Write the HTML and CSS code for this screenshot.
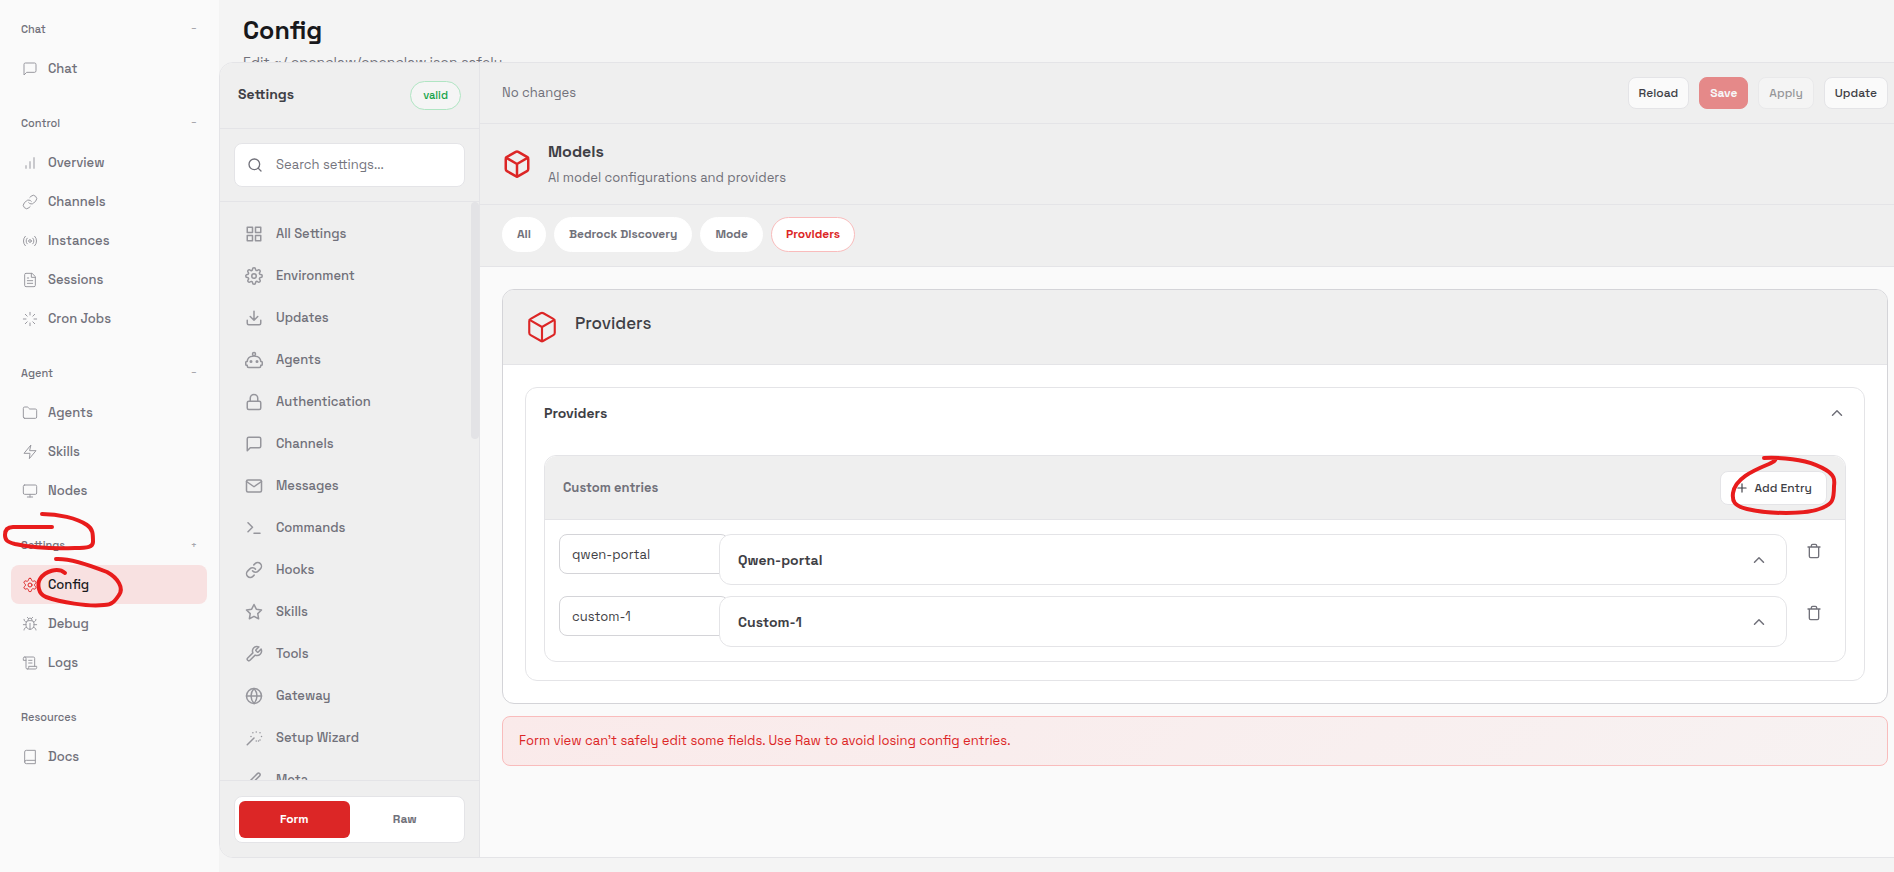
FILE: index.html
```html
<!DOCTYPE html>
<html lang="en">
<head>
    <meta charset="UTF-8">
    <meta name="viewport" content="width=device-width, initial-scale=1.0">
    <title>Config</title>
    <link rel="stylesheet" href="styles.css">
</head>
<body>
    <!-- Icon sprite -->
    <svg class="sprite" aria-hidden="true">
        <symbol id="i-chat" viewBox="0 0 24 24"><path d="M21 15a2 2 0 0 1-2 2H7l-4 4V5a2 2 0 0 1 2-2h14a2 2 0 0 1 2 2z"/></symbol>
        <symbol id="i-bars" viewBox="0 0 24 24"><path d="M12 20V10M18 20V4M6 20v-4"/></symbol>
        <symbol id="i-link" viewBox="0 0 24 24"><path d="M10 13a5 5 0 0 0 7.54.54l3-3a5 5 0 0 0-7.07-7.07l-1.72 1.71"/><path d="M14 11a5 5 0 0 0-7.54-.54l-3 3a5 5 0 0 0 7.07 7.07l1.71-1.71"/></symbol>
        <symbol id="i-radio" viewBox="0 0 24 24"><circle cx="12" cy="12" r="2"/><path d="M16.24 7.76a6 6 0 0 1 0 8.49m-8.48-.01a6 6 0 0 1 0-8.49m11.31-2.82a10 10 0 0 1 0 14.14m-14.14 0a10 10 0 0 1 0-14.14"/></symbol>
        <symbol id="i-file" viewBox="0 0 24 24"><path d="M14.5 2H6a2 2 0 0 0-2 2v16a2 2 0 0 0 2 2h12a2 2 0 0 0 2-2V7.5z"/><path d="M14 2v6h6M16 13H8M16 17H8M10 9H8"/></symbol>
        <symbol id="i-loader" viewBox="0 0 24 24"><path d="M12 2v4M12 18v4M4.93 4.93l2.83 2.83M16.24 16.24l2.83 2.83M2 12h4M18 12h4M4.93 19.07l2.83-2.83M16.24 7.76l2.83-2.83"/></symbol>
        <symbol id="i-folder" viewBox="0 0 24 24"><path d="M4 20h16a2 2 0 0 0 2-2V8a2 2 0 0 0-2-2h-7.93a2 2 0 0 1-1.66-.9l-.82-1.2A2 2 0 0 0 7.93 3H4a2 2 0 0 0-2 2v13a2 2 0 0 0 2 2z"/></symbol>
        <symbol id="i-zap" viewBox="0 0 24 24"><path d="M13 2L3 14h9l-1 8 10-12h-9z"/></symbol>
        <symbol id="i-monitor" viewBox="0 0 24 24"><rect x="2" y="3" width="20" height="14" rx="2"/><path d="M8 21h8M12 17v4"/></symbol>
        <symbol id="i-settings" viewBox="0 0 24 24"><path d="M12.22 2h-.44a2 2 0 0 0-2 2v.18a2 2 0 0 1-1 1.73l-.43.25a2 2 0 0 1-2 0l-.15-.08a2 2 0 0 0-2.73.73l-.22.38a2 2 0 0 0 .73 2.73l.15.1a2 2 0 0 1 1 1.72v.51a2 2 0 0 1-1 1.74l-.15.09a2 2 0 0 0-.73 2.73l.22.38a2 2 0 0 0 2.73.73l.15-.08a2 2 0 0 1 2 0l.43.25a2 2 0 0 1 1 1.73V20a2 2 0 0 0 2 2h.44a2 2 0 0 0 2-2v-.18a2 2 0 0 1 1-1.73l.43-.25a2 2 0 0 1 2 0l.15.08a2 2 0 0 0 2.73-.73l.22-.39a2 2 0 0 0-.73-2.73l-.15-.08a2 2 0 0 1-1-1.74v-.5a2 2 0 0 1 1-1.74l.15-.09a2 2 0 0 0 .73-2.73l-.22-.38a2 2 0 0 0-2.73-.73l-.15.08a2 2 0 0 1-2 0l-.43-.25a2 2 0 0 1-1-1.73V4a2 2 0 0 0-2-2z"/><circle cx="12" cy="12" r="3"/></symbol>
        <symbol id="i-bug" viewBox="0 0 24 24"><path d="M8 2l1.88 1.88M14.12 3.88L16 2M9 7.13v-1a3 3 0 1 1 6 0v1"/><path d="M12 20c-3.3 0-6-2.7-6-6v-3a4 4 0 0 1 4-4h4a4 4 0 0 1 4 4v3c0 3.3-2.7 6-6 6M12 20v-9M6.53 9C4.6 8.8 3 7.1 3 5M6 13H2M3 21c0-2.1 1.7-3.9 3.8-4M20.97 5c0 2.1-1.6 3.8-3.5 4M22 13h-4M17.2 17c2.1.1 3.8 1.9 3.8 4"/></symbol>
        <symbol id="i-scroll" viewBox="0 0 24 24"><path d="M8 21h12a2 2 0 0 0 2-2v-2H10v2a2 2 0 1 1-4 0V5a2 2 0 1 0-4 0v3h4"/><path d="M19 17V5a2 2 0 0 0-2-2H4M15 8h-5M15 12h-5"/></symbol>
        <symbol id="i-book" viewBox="0 0 24 24"><path d="M4 19.5v-15A2.5 2.5 0 0 1 6.5 2H20v20H6.5a2.5 2.5 0 0 1 0-5H20"/></symbol>
        <symbol id="i-search" viewBox="0 0 24 24"><circle cx="11" cy="11" r="8"/><path d="M21 21l-4.35-4.35"/></symbol>
        <symbol id="i-grid" viewBox="0 0 24 24"><path d="M3 3h7v7H3zM14 3h7v7h-7zM14 14h7v7h-7zM3 14h7v7H3z"/></symbol>
        <symbol id="i-gear" viewBox="0 0 24 24"><circle cx="12" cy="12" r="3"/><path d="M19.4 15a1.65 1.65 0 0 0 .33 1.82l.06.06a2 2 0 0 1 0 2.83 2 2 0 0 1-2.83 0l-.06-.06a1.65 1.65 0 0 0-1.82-.33 1.65 1.65 0 0 0-1 1.51V21a2 2 0 0 1-2 2 2 2 0 0 1-2-2v-.09A1.65 1.65 0 0 0 9 19.4a1.65 1.65 0 0 0-1.82.33l-.06.06a2 2 0 0 1-2.83 0 2 2 0 0 1 0-2.83l.06-.06a1.65 1.65 0 0 0 .33-1.82 1.65 1.65 0 0 0-1.51-1H3a2 2 0 0 1-2-2 2 2 0 0 1 2-2h.09A1.65 1.65 0 0 0 4.6 9a1.65 1.65 0 0 0-.33-1.82l-.06-.06a2 2 0 0 1 0-2.83 2 2 0 0 1 2.83 0l.06.06a1.65 1.65 0 0 0 1.82.33H9a1.65 1.65 0 0 0 1-1.51V3a2 2 0 0 1 2-2 2 2 0 0 1 2 2v.09a1.65 1.65 0 0 0 1 1.51 1.65 1.65 0 0 0 1.82-.33l.06-.06a2 2 0 0 1 2.83 0 2 2 0 0 1 0 2.83l-.06.06a1.65 1.65 0 0 0-.33 1.82V9a1.65 1.65 0 0 0 1.51 1H21a2 2 0 0 1 2 2 2 2 0 0 1-2 2h-.09a1.65 1.65 0 0 0-1.51 1z"/></symbol>
        <symbol id="i-download" viewBox="0 0 24 24"><path d="M21 15v4a2 2 0 0 1-2 2H5a2 2 0 0 1-2-2v-4M7 10l5 5 5-5M12 15V3"/></symbol>
        <symbol id="i-robot" viewBox="0 0 24 24"><path d="M12 2a2 2 0 0 1 2 2c0 .74-.4 1.39-1 1.73V7h1a7 7 0 0 1 7 7h1a1 1 0 0 1 1 1v3a1 1 0 0 1-1 1h-1v1a2 2 0 0 1-2 2H5a2 2 0 0 1-2-2v-1H2a1 1 0 0 1-1-1v-3a1 1 0 0 1 1-1h1a7 7 0 0 1 7-7h1V5.73c-.6-.34-1-.99-1-1.73a2 2 0 0 1 2-2z"/><circle cx="8" cy="14" r="1"/><circle cx="16" cy="14" r="1"/></symbol>
        <symbol id="i-lock" viewBox="0 0 24 24"><rect x="3" y="11" width="18" height="11" rx="2"/><path d="M7 11V7a5 5 0 0 1 10 0v4"/></symbol>
        <symbol id="i-mail" viewBox="0 0 24 24"><rect x="2" y="4" width="20" height="16" rx="2"/><path d="M22 6l-10 7L2 6"/></symbol>
        <symbol id="i-terminal" viewBox="0 0 24 24"><path d="M4 17l6-6-6-6M12 19h8"/></symbol>
        <symbol id="i-star" viewBox="0 0 24 24"><path d="M12 2l3.09 6.26L22 9.27l-5 4.87 1.18 6.88L12 17.77l-6.18 3.25L7 14.14 2 9.27l6.91-1.01z"/></symbol>
        <symbol id="i-wrench" viewBox="0 0 24 24"><path d="M14.7 6.3a1 1 0 0 0 0 1.4l1.6 1.6a1 1 0 0 0 1.4 0l3.77-3.77a6 6 0 0 1-7.94 7.94l-6.91 6.91a2.12 2.12 0 0 1-3-3l6.91-6.91a6 6 0 0 1 7.94-7.94z"/></symbol>
        <symbol id="i-globe" viewBox="0 0 24 24"><circle cx="12" cy="12" r="10"/><path d="M2 12h20M12 2a15.3 15.3 0 0 1 4 10 15.3 15.3 0 0 1-4 10 15.3 15.3 0 0 1-4-10 15.3 15.3 0 0 1 4-10z"/></symbol>
        <symbol id="i-wand" viewBox="0 0 24 24"><path d="M15 4V4M15 16v0M8 10h0M22 10h0M20 14.500h0M20 5h0M10.500 5h0M18 16h0M3 21l9-9"/></symbol>
        <symbol id="i-pen" viewBox="0 0 24 24"><path d="M12 20h9M16.5 3.5a2.12 2.12 0 0 1 3 3L7 19l-4 1 1-4z"/></symbol>
        <symbol id="i-cube" viewBox="0 0 24 24"><path d="M21 16V8a2 2 0 0 0-1-1.73l-7-4a2 2 0 0 0-2 0l-7 4A2 2 0 0 0 3 8v8a2 2 0 0 0 1 1.73l7 4a2 2 0 0 0 2 0l7-4A2 2 0 0 0 21 16z"/><path d="M3.27 6.96L12 12.01l8.73-5.05M12 22.08V12"/></symbol>
        <symbol id="i-up" viewBox="0 0 24 24"><path d="M18 15l-6-6-6 6"/></symbol>
        <symbol id="i-plus" viewBox="0 0 24 24"><path d="M12 5v14M5 12h14"/></symbol>
        <symbol id="i-trash" viewBox="0 0 24 24"><path d="M3 6h18M19 6v14a2 2 0 0 1-2 2H7a2 2 0 0 1-2-2V6M8 6V4a2 2 0 0 1 2-2h4a2 2 0 0 1 2 2v2"/></symbol>
    </svg>

    <div class="shell">
        <nav class="nav">
            <div class="nav-group">
                <button class="nav-label">Chat <span>−</span></button>
                <a class="nav-item" href="#"><svg><use href="#i-chat"/></svg>Chat</a>
            </div>
            <div class="nav-group">
                <button class="nav-label">Control <span>−</span></button>
                <a class="nav-item" href="#"><svg><use href="#i-bars"/></svg>Overview</a>
                <a class="nav-item" href="#"><svg><use href="#i-link"/></svg>Channels</a>
                <a class="nav-item" href="#"><svg><use href="#i-radio"/></svg>Instances</a>
                <a class="nav-item" href="#"><svg><use href="#i-file"/></svg>Sessions</a>
                <a class="nav-item" href="#"><svg><use href="#i-loader"/></svg>Cron Jobs</a>
            </div>
            <div class="nav-group">
                <button class="nav-label">Agent <span>−</span></button>
                <a class="nav-item" href="#"><svg><use href="#i-folder"/></svg>Agents</a>
                <a class="nav-item" href="#"><svg><use href="#i-zap"/></svg>Skills</a>
                <a class="nav-item" href="#"><svg><use href="#i-monitor"/></svg>Nodes</a>
            </div>
            <div class="nav-group">
                <button class="nav-label">Settings <span>+</span></button>
                <a class="nav-item active" href="#"><svg><use href="#i-settings"/></svg>Config</a>
                <a class="nav-item" href="#"><svg><use href="#i-bug"/></svg>Debug</a>
                <a class="nav-item" href="#"><svg><use href="#i-scroll"/></svg>Logs</a>
                <!-- Hand-drawn marks over the group -->
                <svg class="mark mark-nav" viewBox="0 0 130 100" aria-hidden="true">
                    <path d="M42 4C58 4 77 8 87 15C93 19 93 24 93 32C93 37 88 38 75 38C55 39 30 37 15 34C7 32 5 30 5 25C5 20 7 17 13 17H52"/>
                    <path d="M56 49C72 48 97 58 107 62C118 68 124 78 119 85C115 91 112 95 104 95C88 97 60 92 46 87C38 84 37 74 40 69C45 61 58 57 65 63"/>
                </svg>
            </div>
            <div class="nav-group">
                <div class="nav-label">Resources</div>
                <a class="nav-item" href="#"><svg><use href="#i-book"/></svg>Docs</a>
            </div>
        </nav>

        <main class="main">
            <header class="page-header">
                <h1>Config</h1>
                <p>Edit ~/.openclaw/openclaw.json safely</p>
            </header>

            <div class="config">
                <aside class="settings">
                    <div class="settings-head">
                        <h2>Settings</h2>
                        <span class="badge">valid</span>
                    </div>
                    <div class="settings-search">
                        <label class="search">
                            <svg><use href="#i-search"/></svg>
                            <input type="text" placeholder="Search settings..." aria-label="Search settings">
                        </label>
                    </div>
                    <div class="settings-body">
                        <div class="settings-list">
                            <button><svg><use href="#i-grid"/></svg>All Settings</button>
                            <button><svg><use href="#i-gear"/></svg>Environment</button>
                            <button><svg><use href="#i-download"/></svg>Updates</button>
                            <button><svg><use href="#i-robot"/></svg>Agents</button>
                            <button><svg><use href="#i-lock"/></svg>Authentication</button>
                            <button><svg><use href="#i-chat"/></svg>Channels</button>
                            <button><svg><use href="#i-mail"/></svg>Messages</button>
                            <button><svg><use href="#i-terminal"/></svg>Commands</button>
                            <button><svg><use href="#i-link"/></svg>Hooks</button>
                            <button><svg><use href="#i-star"/></svg>Skills</button>
                            <button><svg><use href="#i-wrench"/></svg>Tools</button>
                            <button><svg><use href="#i-globe"/></svg>Gateway</button>
                            <button><svg><use href="#i-wand"/></svg>Setup Wizard</button>
                            <button><svg><use href="#i-pen"/></svg>Meta</button>
                        </div>
                        <div class="scroll-thumb"></div>
                    </div>
                    <div class="settings-foot">
                        <div class="mode">
                            <button class="active">Form</button>
                            <button>Raw</button>
                        </div>
                    </div>
                </aside>

                <section class="editor">
                    <div class="actions">
                        <span class="status">No changes</span>
                        <div class="buttons">
                            <button class="btn">Reload</button>
                            <button class="btn primary" disabled>Save</button>
                            <button class="btn" disabled>Apply</button>
                            <button class="btn">Update</button>
                        </div>
                    </div>
                    <div class="hero">
                        <svg><use href="#i-cube"/></svg>
                        <div class="hero-text">
                            <h2>Models</h2>
                            <p>AI model configurations and providers</p>
                        </div>
                    </div>
                    <div class="subnav">
                        <button>All</button>
                        <button>Bedrock Discovery</button>
                        <button>Mode</button>
                        <button class="active">Providers</button>
                    </div>

                    <div class="content">
                        <div class="card">
                            <div class="card-head">
                                <svg><use href="#i-cube"/></svg>
                                <h3>Providers</h3>
                            </div>
                            <div class="card-body">
                                <div class="object">
                                    <button class="object-head">Providers <svg><use href="#i-up"/></svg></button>
                                    <div class="map">
                                        <div class="map-head">
                                            <span>Custom entries</span>
                                            <div class="add-wrap">
                                                <button class="add"><svg><use href="#i-plus"/></svg>Add Entry</button>
                                                <svg class="mark mark-add" viewBox="0 0 112 64" aria-hidden="true">
                                                    <path d="M37 4C66 3 86 8 99 16C107 21 108 25 107 32C107 47 105 50 95 54C79 61 41 60 20 55C7 52 5 47 6 39C8 25 25 17 42 10C48 7 49 6 48 5"/>
                                                </svg>
                                            </div>
                                        </div>
                                        <div class="map-rows">
                                            <div class="map-row">
                                                <div class="key"><input type="text" value="qwen-portal" aria-label="Key"></div>
                                                <button class="entry">Qwen-portal <svg><use href="#i-up"/></svg></button>
                                                <button class="remove" aria-label="Remove entry"><svg><use href="#i-trash"/></svg></button>
                                            </div>
                                            <div class="map-row">
                                                <div class="key"><input type="text" value="custom-1" aria-label="Key"></div>
                                                <button class="entry">Custom-1 <svg><use href="#i-up"/></svg></button>
                                                <button class="remove" aria-label="Remove entry"><svg><use href="#i-trash"/></svg></button>
                                            </div>
                                        </div>
                                    </div>
                                </div>
                            </div>
                        </div>
                        <div class="callout">Form view can't safely edit some fields. Use Raw to avoid losing config entries.</div>
                    </div>
                </section>
            </div>
        </main>
    </div>
</body>
</html>
```
FILE: styles.css
```css
* {
    box-sizing: border-box;
}

body {
    margin: 0;
    font-family: 'Space Grotesk', Inter, sans-serif;
    font-size: 13px;
    line-height: 20px;
    color: #3f3f46;
    background-color: #f4f4f4;
}

h1, h2, h3, p {
    margin: 0;
}

button, input {
    font: inherit;
    color: inherit;
}

button {
    padding: 0;
    border: none;
    background: none;
    cursor: pointer;
}

svg {
    flex-shrink: 0;
    fill: none;
    stroke: currentColor;
    stroke-width: 2;
    stroke-linecap: round;
    stroke-linejoin: round;
}

.sprite {
    position: absolute;
    width: 0;
    height: 0;
}

.shell {
    display: flex;
    height: 100vh;
    overflow: hidden;
}

/* Left navigation */
.nav {
    flex: 0 0 219px;
    padding: 15px 12px 15px 11px;
    background-color: #fafafa;
}

.nav-group {
    position: relative;
    margin-bottom: 21px;
}

.nav-label {
    display: flex;
    justify-content: space-between;
    align-items: center;
    width: 100%;
    height: 28px;
    margin-bottom: 6px;
    padding: 0 10px;
    font-size: 11px;
    font-weight: 500;
    color: #71717a;
}

.nav-label span {
    font-size: 10px;
    opacity: 0.6;
}

.nav-item {
    display: flex;
    align-items: center;
    gap: 10px;
    height: 39px;
    padding: 0 11px;
    border-radius: 8px;
    font-weight: 500;
    color: #71717a;
    text-decoration: none;
}

.nav-item svg {
    width: 16px;
    height: 16px;
    stroke-width: 1.5;
    opacity: 0.7;
}

.nav-item.active {
    background-color: #f8e1e1;
    color: #1a1a1e;
}

.nav-item.active svg {
    color: #dc2626;
    opacity: 1;
}

.mark {
    position: absolute;
    stroke: #e81c1c;
    stroke-width: 4;
    pointer-events: none;
}

.mark-nav {
    top: -21px;
    left: -11px;
    width: 130px;
    height: 100px;
}

.mark-add {
    top: -17px;
    left: 7px;
    width: 112px;
    height: 64px;
}

/* Page */
.main {
    flex: 1;
    min-width: 0;
    display: flex;
    flex-direction: column;
    padding-bottom: 14px;
    overflow: hidden;
}

.page-header {
    height: 62px;
    padding: 14px 24px 0;
    overflow: hidden;
}

.page-header h1 {
    font-size: 25px;
    line-height: 32px;
    font-weight: 600;
    color: #18181b;
}

.page-header p {
    padding-top: 6px;
    font-size: 14px;
    color: #71717a;
}

.config {
    flex: 1;
    min-height: 0;
    display: flex;
    margin-right: -16px;
    border: 1px solid #e4e4e7;
    border-radius: 14px;
    background-color: #fafafa;
    overflow: hidden;
}

/* Settings column */
.settings {
    flex: 0 0 260px;
    display: flex;
    flex-direction: column;
    border-right: 1px solid #e4e4e7;
    background-color: #efefef;
}

.settings-head {
    display: flex;
    justify-content: space-between;
    align-items: center;
    height: 66px;
    padding: 0 18px;
    border-bottom: 1px solid #e4e4e7;
}

.settings-head h2 {
    padding-bottom: 4px;
    font-size: 14px;
    font-weight: 600;
}

.badge {
    padding: 3px 12px;
    border: 1px solid #b0e5c3;
    border-radius: 16px;
    background-color: #f5f5f5;
    font-size: 11px;
    line-height: 21px;
    font-weight: 500;
    color: #16a34a;
}

.settings-search {
    padding: 14px;
    border-bottom: 1px solid #e4e4e7;
}

.search {
    display: flex;
    align-items: center;
    gap: 13px;
    height: 44px;
    padding: 0 12px;
    border: 1px solid #e4e4e7;
    border-radius: 8px;
    background-color: #fff;
    color: #71717a;
}

.search svg {
    width: 16px;
    height: 16px;
}

.search input {
    flex: 1;
    min-width: 0;
    padding: 0;
    border: none;
    outline: none;
    background: none;
}

.search input::placeholder {
    color: #75757d;
}

.settings-body {
    position: relative;
    flex: 1;
    min-height: 0;
}

.settings-list {
    height: 100%;
    padding: 11px 10px;
    overflow-y: auto;
    scrollbar-width: none;
}

.settings-list button {
    display: flex;
    align-items: center;
    gap: 13px;
    width: 100%;
    height: 42px;
    padding: 0 15px;
    font-weight: 500;
    color: #71717a;
}

.settings-list svg {
    width: 18px;
    height: 18px;
    opacity: 0.7;
}

.scroll-thumb {
    position: absolute;
    top: 0;
    right: 0;
    width: 8px;
    height: 41%;
    border-radius: 4px;
    background-color: #e3e3e6;
}

.settings-foot {
    padding: 15px 14px 14px;
    border-top: 1px solid #e4e4e7;
}

.mode {
    display: flex;
    padding: 4px;
    border: 1px solid #e4e4e7;
    border-radius: 8px;
    background-color: #fff;
}

.mode button {
    flex: 1;
    height: 37px;
    padding-bottom: 2px;
    border-radius: 6px;
    font-size: 12px;
    font-weight: 600;
    color: #71717a;
}

.mode .active {
    background-color: #dc2626;
    color: #fff;
}

/* Editor */
.editor {
    flex: 1;
    min-width: 0;
}

.actions, .hero, .subnav {
    display: flex;
    align-items: center;
    padding: 0 21px 0 22px;
    border-bottom: 1px solid #e4e4e7;
    background-color: #efefef;
}

.actions {
    justify-content: space-between;
    height: 61px;
}

.status {
    color: #71717a;
}

.buttons {
    display: flex;
    gap: 10px;
}

.btn {
    height: 32px;
    padding: 0 10px;
    border: 1px solid #e4e4e7;
    border-radius: 8px;
    background-color: #fafafa;
    font-size: 12px;
    font-weight: 500;
}

.btn:disabled {
    opacity: 0.5;
    cursor: default;
}

.btn.primary {
    border-color: #dc2626;
    background-color: #dc2626;
    font-weight: 600;
    color: #fff;
}

.hero {
    gap: 16px;
    height: 81px;
}

.hero svg {
    width: 30px;
    height: 30px;
    color: #dc2626;
}

.hero-text {
    padding-top: 2px;
}

.hero h2 {
    padding-bottom: 6px;
    font-size: 16px;
    font-weight: 600;
}

.hero p {
    color: #71717a;
}

.subnav {
    gap: 8px;
    height: 62px;
    padding-bottom: 3px;
}

.subnav button {
    height: 35px;
    padding: 0 14px;
    border: 1px solid #fff;
    border-radius: 18px;
    background-color: #fff;
    font-size: 12px;
    font-weight: 600;
    color: #71717a;
}

.subnav .active {
    border-color: #f9bcbc;
    color: #dc2626;
}

.content {
    padding: 22px 21px 22px 22px;
}

.card {
    margin-bottom: 12px;
    border: 1px solid #d4d4d8;
    border-radius: 12px;
    background-color: #fff;
    overflow: hidden;
}

.card-head {
    display: flex;
    gap: 16px;
    height: 75px;
    padding: 20px 22px;
    border-bottom: 1px solid #e4e4e7;
    background-color: #efefef;
}

.card-head svg {
    width: 34px;
    height: 34px;
    stroke-width: 1.5;
    color: #dc2626;
}

.card-head h3 {
    padding-top: 3px;
    font-size: 17px;
    font-weight: 500;
}

.card-body {
    padding: 22px;
}

.object, .map {
    border: 1px solid #e4e4e7;
    border-radius: 12px;
}

.object {
    padding: 0 18px 18px;
}

.object-head {
    display: flex;
    justify-content: space-between;
    align-items: center;
    width: 100%;
    height: 50px;
    margin-bottom: 17px;
    font-size: 14px;
    font-weight: 600;
}

.object-head svg, .entry svg {
    width: 18px;
    height: 18px;
    color: #71717a;
}

.map-head {
    display: flex;
    justify-content: space-between;
    align-items: center;
    height: 64px;
    padding: 0 18px;
    border-bottom: 1px solid #e4e4e7;
    border-radius: 12px 12px 0 0;
    background-color: #efefef;
    font-weight: 600;
    color: #71717a;
}

.add-wrap {
    position: relative;
}

.add {
    display: flex;
    align-items: center;
    gap: 6px;
    height: 34px;
    padding: 0 14px;
    border: 1px solid #e4e4e7;
    border-radius: 8px;
    background-color: #fff;
    font-size: 12px;
    font-weight: 500;
    color: #3f3f46;
}

.add svg {
    width: 14px;
    height: 14px;
}

.map-rows {
    display: grid;
    gap: 11px;
    padding: 14px;
}

.map-row {
    display: grid;
    grid-template-columns: 150px 1fr 34px;
    gap: 10px;
    align-items: start;
}

.key input {
    width: 170px;
    height: 40px;
    padding: 0 12px;
    border: 1px solid #d4d4d8;
    border-radius: 8px;
    background-color: #fff;
}

/* The entry sits above the wide key input */
.entry {
    z-index: 1;
    display: flex;
    justify-content: space-between;
    align-items: center;
    height: 51px;
    padding: 0 18px;
    border: 1px solid #e4e4e7;
    border-radius: 12px;
    background-color: #fff;
    font-size: 14px;
    font-weight: 600;
}

.remove {
    display: flex;
    justify-content: center;
    align-items: center;
    height: 34px;
    color: #71717a;
}

.remove svg {
    width: 16px;
    height: 16px;
}

.callout {
    padding: 14px 16px;
    border: 1px solid #f9bcbc;
    border-radius: 8px;
    background: linear-gradient(135deg, #faeaea, #f7f2f2);
    color: #dc2626;
}
```
